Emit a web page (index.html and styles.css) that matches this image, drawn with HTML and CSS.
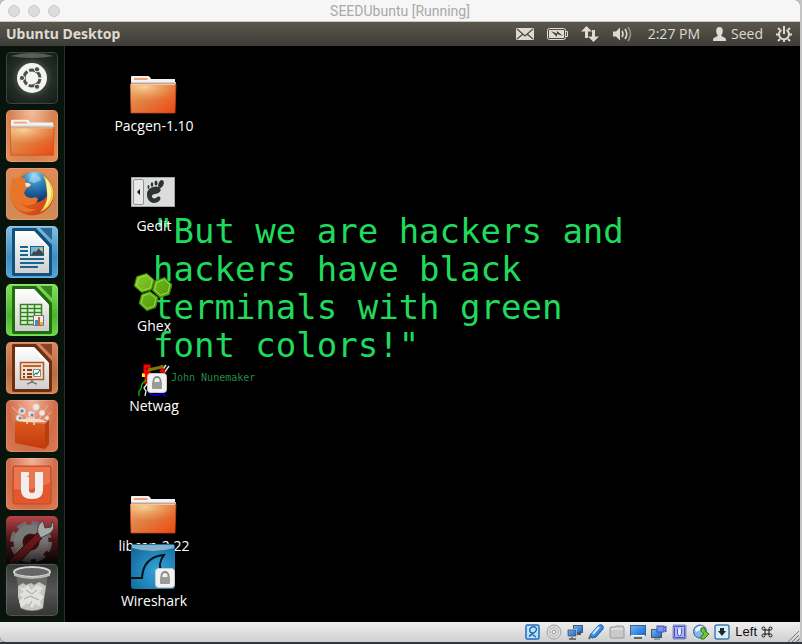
FILE: index.html
```html
<!DOCTYPE html>
<html lang="en">
<head>
<meta charset="utf-8">
<title>SEEDUbuntu [Running]</title>
<link rel="stylesheet" href="styles.css">
</head>
<body>
<svg class="defs" aria-hidden="true">
  <defs>
    <linearGradient id="orange" x1="0" y1="0" x2="1" y2="1"><stop offset="0" stop-color="#e8a468"/><stop offset=".5" stop-color="#e27a3c"/><stop offset="1" stop-color="#ee4710"/></linearGradient>
    <radialGradient id="shine" cx=".3" cy=".1" r=".8"><stop offset="0" stop-color="#f8d9a0" stop-opacity=".9"/><stop offset="1" stop-color="#f0a060" stop-opacity="0"/></radialGradient>
    <linearGradient id="paper" x1="0" y1="0" x2="0" y2="1"><stop offset="0" stop-color="#fff"/><stop offset="1" stop-color="#cfcfcf"/></linearGradient>
    <radialGradient id="globe" cx=".5" cy=".1" r=".9"><stop offset="0" stop-color="#9ad8f2"/><stop offset=".4" stop-color="#2d83bb"/><stop offset="1" stop-color="#10306a"/></radialGradient>
    <linearGradient id="fox" x1="0" y1="0" x2="1" y2="1"><stop offset="0" stop-color="#f08a2c"/><stop offset=".5" stop-color="#e0601c"/><stop offset="1" stop-color="#c8381a"/></linearGradient>
    <linearGradient id="bag" x1="0" y1="0" x2="0" y2="1"><stop offset="0" stop-color="#dc5a1c"/><stop offset="1" stop-color="#c23a0c"/></linearGradient>
    <linearGradient id="hex" x1="0" y1="0" x2="1" y2="1"><stop offset="0" stop-color="#8ad02c"/><stop offset=".5" stop-color="#62ac14"/><stop offset="1" stop-color="#4a9606"/></linearGradient>
    <radialGradient id="sea" cx=".6" cy=".6" r=".7"><stop offset="0" stop-color="#34a4dc"/><stop offset="1" stop-color="#146c9e"/></radialGradient>
    <linearGradient id="screenblue" x1="0" y1="0" x2="1" y2="1"><stop offset="0" stop-color="#6fb9fa"/><stop offset="1" stop-color="#0d66d4"/></linearGradient>
    <symbol id="folder" viewBox="0 0 48 48">
      <path d="M1 16V8q0-1 1-1h16q2 0 3 3h24v8H1z" fill="#f2f2f2"/><path d="M4 9h13l1 2H4z" fill="#f0a274"/><path d="M1 13h45v3H1z" fill="#cfcfcf"/>
      <path d="M0 15h46l-1 29H1z" fill="url(#orange)" stroke="#c64a14" stroke-width=".7"/><path d="M1 16h44v12Q25 36 1 34z" fill="url(#shine)"/><path d="M1 15.500h44" stroke="#f7c79c"/>
    </symbol>
    <symbol id="lock" viewBox="0 0 20 20">
      <rect x=".5" y=".5" width="19" height="19" rx="3" fill="#f2f2f2" stroke="#c8c8c8"/><path d="M6.500 10V7.500a3.500 3.500 0 0 1 7 0V10" fill="none" stroke="#888" stroke-width="1.800"/><rect x="5" y="9" width="10" height="7" rx="1" fill="#9a9a96"/>
    </symbol>
    <symbol id="sheet" viewBox="0 0 52 52">
      <path d="M7 2h23L46 19v29q0 2-2 2H8q-2 0-2-2V3z" fill="currentColor"/><path d="M34 2h12v12z" fill="currentColor" opacity=".75"/>
      <path d="M9 5h19l15 16v26H9z" fill="url(#paper)"/><path d="M28 5l15 16-10-6z" fill="#fff"/>
    </symbol>
  </defs>
</svg>
<div class="window">
  <header class="titlebar">
    <div class="lights"><button aria-label="Close"></button><button aria-label="Minimize"></button><button aria-label="Zoom"></button></div>
    <h1>SEEDUbuntu [Running]</h1>
  </header>
  <div class="panel">
    <strong>Ubuntu Desktop</strong>
    <div class="indicators">
      <button aria-label="Mail"><svg width="18" height="12" viewBox="0 0 18 12"><rect width="18" height="12" rx="1" fill="#dfdbd2"/><path d="M1 1l8 7 8-7M1 11l6-5M17 11l-6-5" fill="none" stroke="#4a4943" stroke-width="1.200"/></svg></button>
      <button aria-label="Battery"><svg width="21" height="12" viewBox="0 0 21 12"><rect x=".5" y=".5" width="18" height="11" rx="2" fill="none" stroke="#dfdbd2"/><rect x="2" y="2" width="15" height="8" fill="#dfdbd2"/><path d="M19 3.500h1.500v5H19" fill="none" stroke="#dfdbd2"/><path d="M4 3l6 2.500V3l6 5-6-2v3z" fill="#45443f"/></svg></button>
      <button aria-label="Network"><svg width="18" height="18" viewBox="0 0 18 18"><path d="M5.500 1L0 6.500h4V13h3V6.500h4zM12.500 17L7 11.500h4V5h3v6.500h4z" fill="#dfdbd2"/></svg></button>
      <button aria-label="Sound"><svg width="21" height="16" viewBox="0 0 21 16"><path d="M1 5.500h3l4-4v13l-4-4H1z" fill="#dfdbd2"/><path d="M10 5q2 3 0 6M13 3q3.500 5 0 10" fill="none" stroke="#dfdbd2" stroke-width="1.600"/><path d="M16 1q5 7 0 14" fill="none" stroke="#96938a" stroke-width="1.600"/></svg></button>
      <button class="clock">2:27 PM</button>
      <button class="user"><svg width="13" height="14" viewBox="0 0 13 14"><path d="M6.500 0C9 0 10 2 9.800 4.500 9.500 7 8.500 8 8.300 9l4 2q.700.500.700 3H0q0-2.500.700-3l4-2C4.500 8 3.500 7 3.200 4.500 3 2 4 0 6.500 0z" fill="#dfdbd2"/></svg>Seed</button>
      <button aria-label="Session"><svg width="16" height="16" viewBox="0 0 16 16" fill="none" stroke="#dfdbd2"><path d="M5.500 4A5 5 0 1 0 10.500 4" stroke-width="2"/><path d="M8 0v8" stroke-width="2"/><path d="M2 2l2 2M14 2l-2 2M0 8.500h3M13 8.500h3M2 15l2-2M14 15l-2-2M8 13v3" stroke-width="2"/></svg></button>
    </div>
  </div>
  <main class="workspace">
    <nav class="launcher" aria-label="Launcher">
      <button class="tile dash" aria-label="Dash home"><svg viewBox="0 0 52 52"><path d="M4 4Q26-2 48 4q-22 4-44 0z" fill="#aab0ab" opacity=".4"/><circle cx="26" cy="26" r="15" fill="#f4f4f2"/><circle cx="26" cy="26" r="8" fill="none" stroke="#4c504c" stroke-width="3" stroke-dasharray="14.800 2" stroke-dashoffset="-1"/><g fill="#4c504c" stroke="#f4f4f2"><circle cx="16" cy="26" r="2.600"/><circle cx="31" cy="17.300" r="2.600"/><circle cx="31" cy="34.700" r="2.600"/></g></svg></button>
      <button class="tile sand" aria-label="Files"><svg viewBox="0 0 52 52"><use href="#folder" x="4" y="3" width="46" height="46"/></svg></button>
      <button class="tile tan" aria-label="Firefox"><svg viewBox="0 0 52 52"><circle cx="26" cy="25.500" r="22" fill="url(#fox)"/><ellipse cx="28" cy="19" rx="16" ry="15.500" fill="url(#globe)"/><path d="M26 6q8 1 9 6l-7 3-5-2z" fill="#a9dcf0" opacity=".6"/><path d="M37 7q13 10 10 23-3 10-13 14 8-9 7-18 0-10-4-19z" fill="#f0cf42"/><path d="M40 10q6 8 5 18-2 8-7 12 5-9 3-17z" fill="#fbf1a0"/><path d="M6 12q0-2 1-3 1 2 3 3 3-3 9-2 0 3 1 5 3 0 5 2 0 2-4 3-2 2-3 5 2 5 8 5 4-2 6 1-1 5-8 6-7 1-10-4 5 10 17 8-10 6-19 0Q1 31 5 17z" fill="#e8762a"/><path d="M19 15q4-1 6 2-2 2-5 2z" fill="#f9e5cf"/></svg></button>
      <button class="tile blue" aria-label="Writer"><svg viewBox="0 0 52 52"><use href="#sheet"/><g fill="#18658f"><path d="M14 20h8v2h-8zM14 24h8v2h-8zM14 28h8v2h-8zM14 32h24v2H14zM14 36h24v2H14zM14 40h18v2H14zM24 20h14v10H24z"/></g><path d="M25 21h12v8H25z" fill="#74b8d8"/><path d="M25 29l3-4 2 1 3-4 4 5v2z" fill="#444"/><circle cx="35" cy="23" r="1.500" fill="#e9c348"/></svg></button>
      <button class="tile green" aria-label="Calc"><svg viewBox="0 0 52 52"><use href="#sheet"/><path d="M14 20h22v21H14z" fill="#e4f2df"/><path d="M14.500 20.500h21v20h-21zM14 24.500h22M14 28.500h22M14 32.500h22M14 36.500h22M21.500 20v21M28.500 20v21" fill="none" stroke="#34841b" stroke-width="1.500"/><path d="M27.500 31.500h10v10h-10z" fill="#eee" stroke="#777"/><path d="M29 36h3v5h-3z" fill="#3c8ed0"/><path d="M32 33h2v8h-2z" fill="#d36420"/><path d="M34 38h3v3h-3z" fill="#e9b820"/></svg></button>
      <button class="tile brown" aria-label="Impress"><svg viewBox="0 0 52 52"><use href="#sheet"/><path d="M14.500 20.500h23v17h-23z" fill="#f2dfd0" stroke="#ad592a" stroke-width="1.500"/><path d="M17 23h18v2H17z" fill="#b9632d"/><path d="M17 27h2v2h-2zM17 31h2v2h-2zM17 34h2v2h-2zM21 27h5v2h-5zM21 31h5v2h-5zM21 34h5v2h-5z" fill="#854220"/><path d="M27.500 27.500h7v7h-7z" fill="#fff" stroke="#888"/><path d="M28 33l2-2 1 1 3-4" fill="none" stroke="#2a9344" stroke-width="1.200"/><path d="M26 38v3M26 39q-1 2-5 3M26 39q1 2 5 3" fill="none" stroke="#777" stroke-width="1.500"/></svg></button>
      <button class="tile coral" aria-label="Software Center"><svg viewBox="0 0 52 52"><path d="M17 18L6 7M21 18L13 4M28 17l2-14M33 19l9-14M37 20l8-8" stroke="#f7c9b6" opacity=".7"/><g fill="#f3e4de" stroke="#d6b3a6" stroke-width=".6"><circle cx="16" cy="11" r="3.500"/><circle cx="30" cy="7" r="3.500"/><circle cx="25" cy="14" r="3"/><circle cx="36" cy="13" r="3"/><circle cx="13" cy="18" r="3"/><circle cx="41" cy="18" r="2"/></g><g fill="#5d8cab"><circle cx="16" cy="11" r="1.800"/><circle cx="26" cy="15" r="1.500"/><circle cx="14" cy="18" r="1.500"/></g><path d="M20 22h-9l5-3h18l7 3z" fill="#f8ddc6"/><path d="M9 21l30 3v25L9 43z" fill="url(#bag)"/><path d="M39 24l4-4v24l-4 5z" fill="#b83e10"/><path d="M21 24v-6h7v7" fill="none" stroke="#f5d9cb" stroke-width="1.500"/></svg></button>
      <button class="tile coral" aria-label="Ubuntu One"><svg viewBox="0 0 52 52"><rect x="7" y="8" width="38" height="38" rx="2" fill="#e4572d" stroke="#bd4a26"/><path d="M8 9h36v16Q25 34 8 31z" fill="#ef936f" opacity=".5"/><path d="M15 14h8v3l-2 2h2v13q0 3 3 3t3-3V14h8v18q0 9-11 9t-11-9z" fill="#f1eeee"/></svg></button>
      <button class="tile settings" aria-label="System Settings"><svg viewBox="0 0 52 47"><circle cx="25" cy="26" r="17.500" fill="none" stroke="#6c6c6c" stroke-width="7" stroke-dasharray="9 4.740"/><circle cx="25" cy="26" r="13" fill="none" stroke="#777" stroke-width="9"/><circle cx="25" cy="26" r="8" fill="#321011"/><path d="M3 45L31 17l5 5-23 25H4z" fill="#6b1719" stroke="#230707"/><path d="M32 17q-2-8 5-12l2 7 6-1 1-6q5 8-3 13-5 2-8 4z" fill="#a8a8a8" stroke="#444"/></svg></button>
      <button class="tile trash" aria-label="Trash"><svg viewBox="0 0 52 52"><path d="M10 9l5 36q11 4 22 0l5-36z" fill="#777" opacity=".7"/><path d="M12 22l5-3 3 2 5-2 3 2 5-3 7 4-2 12-1 10q-11 5-22 0l-3-11z" fill="#c5c6c2"/><path d="M13 23l5 1 4-3 3 5 6-5 6 3-4 5 5 4-4 4 1 6-6-3-3 4-5-5-6 5-2-7 4-3-4-4 5-2z" fill="#e1e2de"/><path d="M20 26l6 4 5-4M18 35l6-3 9 4M23 42l3-5" fill="none" stroke="#a3a49f"/><ellipse cx="26" cy="8" rx="18" ry="5" fill="#666" stroke="#d4d4d4" stroke-width="2"/><path d="M8 9q18 8 36 0v3q-18 6-36 0z" fill="#b9b9b9"/></svg></button>
    </nav>
    <section class="desktop" aria-label="Desktop">
      <blockquote class="quote">
        <p>"But we are hackers and<br>hackers have black<br>terminals with green<br>font colors!"</p>
        <footer>John Nunemaker</footer>
      </blockquote>
      <button class="item pacgen"><svg><use href="#folder"/></svg><span>Pacgen-1.10</span></button>
      <button class="item gedit"><svg viewBox="0 0 48 48"><path d="M1.500 8.500h43v29h-43z" fill="#dcdcdc" stroke="#aaa"/><rect x="3.500" y="10.500" width="10" height="25" rx="1.500" fill="#e8e8e8" stroke="#929292"/><path d="M10 20v6l-3-3z" fill="#111"/><path d="M17 26c-1-7 8-10 12-8 4 3 0 7-4 7-3 0-4 3-2 4 3 2 4-3 7-1 2 3-3 6-6 6-4 0-7-4-7-8z" fill="#2e3436"/><ellipse cx="31" cy="15" rx="2.500" ry="4" fill="#2e3436" transform="rotate(22 31 15)"/><ellipse cx="26" cy="14" rx="1.500" ry="2.500" fill="#2e3436"/><ellipse cx="22" cy="15.500" rx="1.200" ry="2.200" fill="#2e3436"/><ellipse cx="18.500" cy="18" rx="1" ry="2" fill="#2e3436"/></svg><span>Gedit</span></button>
      <button class="item ghex"><svg viewBox="0 0 48 48" fill="url(#hex)" stroke="#3f8706"><path d="M6.700 7.700L16.700 4.500l7.600 6.500-2.600 9.500-10 3-7.400-6.500zM25 12l9.700-3.500 7.300 7-2.700 10-9.300 3-7.500-7zM11.500 25.500L20 22.500l8 6-2.300 10-9 3.200-7.500-7z"/><path d="M8.300 8.800l8-2.500 5.900 5-2 7.700-8 2.400-5.800-5zM26.600 13.300l7.800-2.700 5.500 5.300-2.100 7.900-7.300 2.400-5.900-5.500zM13.100 26.800l6.600-2.300 6.300 4.800-1.900 7.700-7 2.500-5.900-5.500z" fill="none" stroke="#a4db4e"/></svg><span>Ghex</span></button>
      <button class="item netwag"><svg viewBox="0 0 48 48"><path d="M16 21v14M15 17h4v8h-4z" stroke="red" stroke-width="3"/><path d="M18 21l14-3v-2" fill="none" stroke="#7d7a00" stroke-width="3"/><path d="M31 23l5-7M34 24l5-7" stroke="#ddd" stroke-width="1.500"/><path d="M29 23l4-5 3 6z" fill="red"/><path d="M12 24v4h3v-3z" fill="#ff0"/><path d="M16 31l-4 4-1 5-2 2v5" fill="none" stroke="#0c0" stroke-width="1.300"/><path d="M19 44l4 2h5l3-2 5 3" fill="none" stroke="#00f" stroke-width="1.500"/><path d="M17 35l-3 4 2 3-1 5" fill="none" stroke="#eee" stroke-width="1.300"/><use href="#lock" x="17" y="24" width="20" height="20"/></svg><span>Netwag</span></button>
      <button class="item libcap"><svg><use href="#folder"/></svg><span>libcap-2.22</span></button>
      <button class="item wireshark"><svg viewBox="0 0 48 48"><rect x="1" y="0" width="44" height="45" rx="3" fill="url(#sea)"/><path d="M2 1h42v3Q23 10 2 4z" fill="#b6cbd4" opacity=".7"/><path d="M1 34h11q1-21 22-23-7 9-2 18" fill="none" stroke="#071117" stroke-width="2"/><use href="#lock" x="25" y="24" width="20" height="20"/></svg><span>Wireshark</span></button>
    </section>
  </main>
  <footer class="status">
    <button aria-label="Hard disks"><svg viewBox="0 0 16 16"><rect x="1" y="1" width="13" height="14" rx="1.500" fill="#bfe2fb" stroke="#236fba" stroke-width="1.500"/><path d="M5 12l5-4q3-3 0-5-4-1-5 2-1 4 3 4M4 12.500l2-2M8 11l3 2" fill="none" stroke="#1d66af" stroke-width="1.400"/></svg></button>
    <button aria-label="Optical drives"><svg viewBox="0 0 16 16"><circle cx="8" cy="8" r="7" fill="#ddd" stroke="#a0a0a0"/><circle cx="8" cy="8" r="4.500" fill="none" stroke="#bbb"/><circle cx="8" cy="8" r="2" fill="#eee" stroke="#999"/></svg></button>
    <button aria-label="Network"><svg viewBox="0 0 16 16"><rect x="6.500" y="1.500" width="9" height="7" fill="url(#screenblue)" stroke="#555"/><path d="M10 10h4" stroke="#555" stroke-width="2"/><rect x=".5" y="5.500" width="9" height="7" fill="url(#screenblue)" stroke="#fff"/><rect x="1" y="6" width="8" height="6" fill="none" stroke="#555"/><path d="M5 13v1M2 15h7" stroke="#555" stroke-width="1.500"/></svg></button>
    <button aria-label="USB"><svg viewBox="0 0 16 16"><path d="M1 15l2-4" stroke="#666" stroke-width="2"/><path d="M2 11L10 2q2-2 4-1t1 4L8 13l-4 1z" fill="url(#screenblue)" stroke="#1e5e9f"/><path d="M5 10l6-7" stroke="#c7e8ff" stroke-width="2"/></svg></button>
    <button aria-label="Shared folders"><svg viewBox="0 0 16 16"><path d="M1 13V4l1-1h4l1-1h7l1 2v9q0 1-1 1H2z" fill="#cacaca" stroke="#999"/><path d="M2 5h12" stroke="#eee"/></svg></button>
    <button aria-label="Display"><svg viewBox="0 0 16 16"><rect x=".5" y="1.500" width="15" height="10" fill="url(#screenblue)" stroke="#416086"/><path d="M1 11.500h14" stroke="#fff"/><path d="M4 14h8" stroke="#666" stroke-width="2"/></svg></button>
    <button aria-label="Recording"><svg viewBox="0 0 16 16"><rect x=".5" y="5.500" width="10" height="8" fill="url(#screenblue)" stroke="#555"/><path d="M3 15h6" stroke="#666"/><rect x="6" y="2" width="7" height="6" fill="#7993e8" stroke="#4154bd"/><path d="M13 4l2-2v6l-2-2" fill="#7993e8" stroke="#4154bd"/></svg></button>
    <button aria-label="Processor"><svg viewBox="0 0 16 16"><rect x="1.500" y="1.500" width="12" height="13" fill="none" stroke="#3440b5" stroke-width="2" stroke-dasharray="1 1"/><rect x="2.500" y="2.500" width="10" height="11" rx="1" fill="#aeb7f2" stroke="#4553c6"/><path d="M5.500 4.500V9q0 3 2 3t2-3V4.500" fill="#e8eaff" stroke="#4c59cc"/></svg></button>
    <button aria-label="Mouse integration"><svg viewBox="0 0 16 16"><circle cx="7" cy="7.500" r="6.500" fill="#82b8e8" stroke="#2b5f9b"/><path d="M2 5q4-4 8-3L7 6 3 8z" fill="#e9f6ff"/><path d="M8 4h4v3l4 3-5 5H8v-3l3-2-3-3z" fill="#77c52e" stroke="#2b7b24"/></svg></button>
    <button aria-label="Keyboard capture"><svg viewBox="0 0 16 16"><rect x="1" y="1" width="14" height="14" rx="2" fill="#d9edfa" stroke="#477da7" stroke-width="1.500"/><path d="M6 4h4v3h2l-4 5-4-5h2z" fill="#1d2733"/></svg></button>
    <span class="hostkey">Left <svg width="12" height="12" viewBox="0 0 12 12"><path d="M4 4h4v4H4zM4 4H2.500A1.500 1.500 0 1 1 4 2.500zM8 4V2.500A1.500 1.500 0 1 1 9.500 4zM8 8h1.500A1.500 1.500 0 1 1 8 9.500zM4 8v1.500A1.500 1.500 0 1 1 2.500 8z" fill="none" stroke="#111"/></svg></span>
    <svg class="grip" viewBox="0 0 12 12"><path d="M1 12L12 1M5 12l7-7M9 12l3-3" stroke="#777"/></svg>
  </footer>
</div>
</body>
</html>
```
FILE: styles.css
```css
* { box-sizing: border-box; }
body {
  margin: 0;
  min-height: 100vh;
  display: flex;
  padding: 0 2px 2px 0;
  background: linear-gradient(90deg, #34373b, #33363b) bottom / 100% 2px no-repeat, #c4c4c4;
  font-family: "Open Sans", "Noto Sans", sans-serif;
}
button { border: 0; padding: 0; background: none; font: inherit; color: inherit; }
svg { display: block; flex: none; }
.defs { position: absolute; width: 0; height: 0; }
.window { flex: 1; display: flex; flex-direction: column; border-radius: 5px; overflow: hidden; background: #000; }

.titlebar {
  height: 22px;
  display: grid;
  grid-template-columns: 1fr auto 1fr;
  align-items: center;
  padding: 0 8px;
  background: #f6f6f6;
  border-bottom: 1px solid #c9c8c6;
}
.titlebar h1 { margin: 0; font: 14px/20px Roboto, sans-serif; color: #a9a9a9; }
.lights { display: flex; gap: 8px; }
.lights button { width: 12px; height: 12px; border-radius: 50%; background: #dcdcdc; border: 1px solid #cacaca; }

.panel {
  height: 24px;
  display: flex;
  align-items: center;
  justify-content: space-between;
  padding: 0 8px 0 6px;
  background: linear-gradient(#5a574e, #3d3c38);
  color: #dfdbd2;
  font-size: 14px;
  line-height: 20px;
}
.panel strong { font-family: "Noto Sans", sans-serif; }
.indicators { display: flex; align-items: center; gap: 13px; }
.clock { margin-left: 2px; }
.user { display: flex; align-items: center; gap: 5px; }

.workspace { flex: 1; display: flex; }
.launcher {
  width: 65px;
  display: flex;
  flex-direction: column;
  gap: 6px;
  padding: 6px;
  background: #07130b;
  border-right: 1px solid #2b2f2c;
}
.tile { width: 52px; height: 52px; border-radius: 5px; overflow: hidden; box-shadow: inset 0 0 0 1px rgba(255, 255, 255, .15); }
.tile svg { width: 100%; height: 100%; }
.dash { background: radial-gradient(circle, #8a8f8b, #252d28 55%, #121a15); box-shadow: inset 0 0 0 1px #3d443f; }
.sand { background: radial-gradient(at 50% 0, #f2bf9f, #d6804f 60%, #e8905b); }
.tan { background: linear-gradient(#e28b52, #c98a5c 60%, #d88b52); }
.blue { background: linear-gradient(#82bfe4, #3f8dc2 60%, #53a5dd); color: #124f7a; }
.green { background: linear-gradient(#84e05e, #4bb52d 60%, #67da47); color: #22690f; }
.brown { background: linear-gradient(#dc8960, #b96d45 60%, #d5824f); color: #6b3014; }
.coral { background: radial-gradient(at 50% 0, #f3b39c, #cf6d49 65%, #dd7b54); }
.settings { height: 47px; border-radius: 5px 5px 0 0; background: linear-gradient(#b74348, #4a1517 50%, #050505); box-shadow: none; }
.settings svg { -webkit-mask-image: linear-gradient(#000 50%, rgba(0, 0, 0, .25)); mask-image: linear-gradient(#000 50%, rgba(0, 0, 0, .25)); }
.trash { margin-top: -5px; background: linear-gradient(#343837, #555 50%, #343534); }

.desktop { flex: 1; position: relative; }
.quote { margin: 0; padding: 166px 0 0 88px; }
.quote p { margin: 0; font: 34px/38px "DejaVu Sans Mono", monospace; color: #20da5c; white-space: nowrap; }
.quote footer { padding-left: 18px; font: 10px/28px "DejaVu Sans Mono", monospace; color: #238a49; }
.item { position: absolute; left: 29px; width: 120px; display: flex; flex-direction: column; align-items: center; color: #fff; font-size: 14px; line-height: 18px; }
.item svg { width: 48px; height: 48px; }
.pacgen { top: 23px; }
.gedit { top: 123px; }
.ghex { top: 223px; }
.netwag { top: 303px; }
.libcap { top: 443px; }
.wireshark { top: 498px; }

.status {
  height: 20px;
  display: flex;
  align-items: center;
  justify-content: flex-end;
  gap: 5px;
  padding-right: 1px;
  background: linear-gradient(#efefef, #cfcfcf);
}
.status button svg { width: 16px; height: 16px; }
.hostkey { display: flex; align-items: center; gap: 4px; margin-right: 9px; font: 13px/18px "Liberation Sans", sans-serif; color: #111; }
.grip { width: 12px; height: 12px; align-self: flex-end; }
```
